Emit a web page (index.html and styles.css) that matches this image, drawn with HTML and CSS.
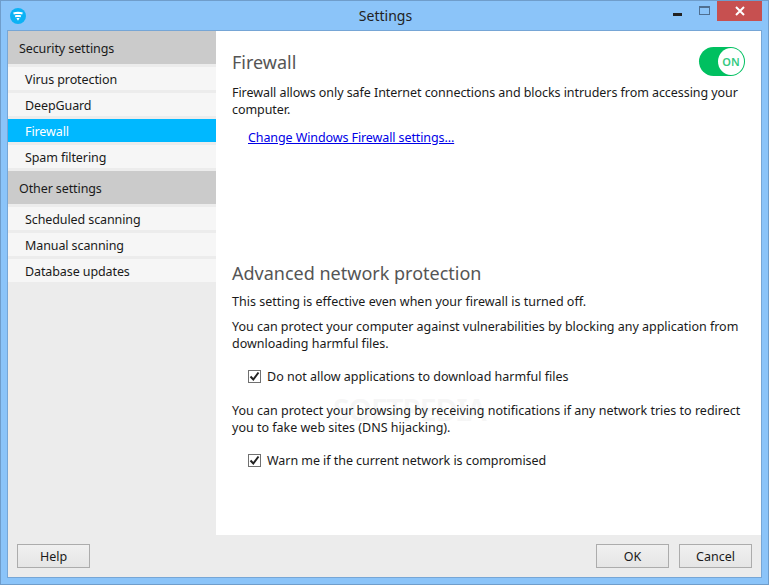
FILE: index.html
```html
<!DOCTYPE html>
<html lang="en">
<head>
<meta charset="utf-8">
<title>Settings</title>
<link rel="stylesheet" href="styles.css">
</head>
<body>
<div class="window">
  <header class="titlebar">
    <svg class="logo" width="16" height="16" viewBox="0 0 16 16"><circle cx="8" cy="8" r="8" fill="#0bb2f5"/><path d="M3.2 4.4 C6.2 3.6 9.8 3.6 12.8 4.4 L12.2 6.4 C9.4 5.8 6.6 5.8 3.8 6.4 Z M4.8 7.4 C7 7 9 7 11.2 7.4 L10.6 9.2 C8.8 8.9 7.2 8.9 5.4 9.2 Z M6.4 10 L9.6 10 L8 12.8 Z" fill="#fff"/></svg>
    <div class="title">Settings</div>
    <div class="controls">
      <div class="ctl min"><span class="min-bar"></span></div>
      <div class="ctl max"><span class="max-box"></span></div>
      <div class="ctl close"><svg width="10" height="10" viewBox="0 0 10 10"><path d="M1 1 L9 9 M9 1 L1 9" stroke="#fff" stroke-width="2"/></svg></div>
    </div>
  </header>
  <div class="client">
    <div class="main">
      <nav class="sidebar">
        <div class="group">Security settings</div>
        <div class="item">Virus protection</div>
        <div class="item">DeepGuard</div>
        <div class="item active">Firewall</div>
        <div class="item">Spam filtering</div>
        <div class="group">Other settings</div>
        <div class="item">Scheduled scanning</div>
        <div class="item">Manual scanning</div>
        <div class="item">Database updates</div>
      </nav>
      <section class="content">
        <div class="watermark">SOFTPEDIA</div>
        <div class="fw-head">
          <h1 class="heading fw-title">Firewall</h1>
          <div class="toggle"><span class="knob">ON</span></div>
        </div>
        <p class="text fw-text">Firewall allows only safe Internet connections and blocks intruders from accessing your computer.</p>
        <a class="link" href="#">Change Windows Firewall settings...</a>
        <h1 class="heading adv">Advanced network protection</h1>
        <p class="text p1">This setting is effective even when your firewall is turned off.</p>
        <p class="text p2">You can protect your computer against vulnerabilities by blocking any application from downloading harmful files.</p>
        <label class="check c1"><span class="box"><svg width="11" height="11" viewBox="0 0 11 11"><path d="M1.5 5.5 L4.3 8.5 L9.5 1.5" fill="none" stroke="#222" stroke-width="2"/></svg></span>Do not allow applications to download harmful files</label>
        <p class="text p3">You can protect your browsing by receiving notifications if any network tries to redirect you to fake web sites (DNS hijacking).</p>
        <label class="check c2"><span class="box"><svg width="11" height="11" viewBox="0 0 11 11"><path d="M1.5 5.5 L4.3 8.5 L9.5 1.5" fill="none" stroke="#222" stroke-width="2"/></svg></span>Warn me if the current network is compromised</label>
      </section>
    </div>
    <footer class="footer">
      <button class="btn">Help</button>
      <div class="spacer"></div>
      <button class="btn">OK</button>
      <button class="btn">Cancel</button>
    </footer>
  </div>
</div>
</body>
</html>
```
FILE: styles.css
```css
* { box-sizing: border-box; }
html, body { margin: 0; padding: 0; }
body {
  width: 769px; height: 585px; overflow: hidden;
  font-family: "Noto Sans", "Open Sans", sans-serif;
  font-size: 12.5px; color: #1a1a1a;
}
.window {
  width: 769px; height: 585px;
  background: #8bc4f9;
  border: 1px solid #6f9dcb;
  padding: 0 7px 7px 7px;
  display: flex; flex-direction: column;
}
.titlebar { height: 30px; display: flex; align-items: center; position: relative; flex: none; }
.logo { position: absolute; left: 2px; top: 7px; }
.title { flex: 1; text-align: center; font-size: 14px; color: #222; padding-left: 2px; margin-bottom: 2px; }
.controls { position: absolute; right: -1px; top: 0; display: flex; align-items: stretch; height: 20px; }
.ctl { display: flex; align-items: center; justify-content: center; }
.min { width: 27px; }
.min-bar { width: 9px; height: 3px; background: #222; margin-top: 6px; }
.max { width: 26px; }
.max-box { width: 11px; height: 9px; border: 1px solid #4f6f91; border-top-width: 2px; margin-top: -1px; }
.close { width: 45px; background: #c75050; }
.client {
  flex: 1; background: #ececec;
  display: flex; flex-direction: column;
  box-shadow: 0 0 0 1px #76a6d6;
}
.main { height: 504px; display: flex; flex: none; }
.sidebar { width: 208px; flex: none; display: flex; flex-direction: column; letter-spacing: -0.1px; }
.group { height: 33px; background: #cbcbcb; padding: 1px 0 0 11px; line-height: 33px; margin-bottom: 3px; }
.item { height: 23px; background: #f6f6f6; padding: 1px 0 0 17px; line-height: 23px; margin-bottom: 3px; }
.item.active { background: #00b8ff; color: #fff; }
.content { flex: 1; min-width: 0; background: #fff; padding: 16px 16px 0; position: relative; overflow: hidden; }
.watermark {
  position: absolute; left: 117px; top: 359px; pointer-events: none;
  font-size: 30px; font-weight: 600; letter-spacing: -1px; line-height: 40px; color: #f6f6f6;
}
.fw-head { display: flex; justify-content: space-between; align-items: flex-start; position: relative; }
.heading { margin: 0; font-size: 18px; font-weight: 400; color: #555; line-height: 24px; position: relative; }
.fw-title { margin-top: 3px; }
.toggle { width: 46px; height: 29px; border-radius: 15px; background: #00c060; position: relative; }
.knob {
  position: absolute; right: 1px; top: 1px; width: 26px; height: 27px;
  border-radius: 50%; background: #fff; color: #33c97f;
  font-size: 11px; font-weight: 600; line-height: 27px; text-align: center;
}
.text { margin: 0; line-height: 17px; position: relative; }
.fw-text { margin-top: 8px; width: 513px; letter-spacing: -0.06px; }
.link { display: block; margin: 11px 0 0 16px; color: #0000e6; line-height: 17px; position: relative; letter-spacing: -0.1px; }
.adv { margin-top: 115px; }
.p1 { margin-top: 8px; }
.p2 { margin-top: 8px; width: 513px; letter-spacing: -0.02px; }
.check { display: flex; align-items: center; line-height: 17px; position: relative; }
.box {
  width: 13px; height: 13px; border: 1px solid #707070; background: #fff;
  display: flex; align-items: center; justify-content: center; margin-right: 6px;
}
.c1 { margin: 16px 0 0 16px; }
.p3 { margin-top: 17px; width: 513px; }
.c2 { margin: 16px 0 0 16px; letter-spacing: -0.05px; }
.footer { flex: 1; display: flex; align-items: flex-start; padding: 9px 9px 0; gap: 10px; }
.spacer { flex: 1; }
.btn {
  width: 73px; height: 24px; border: 1px solid #acacac;
  background: linear-gradient(#f0f0f0, #e5e5e5);
  font: inherit; color: #1a1a1a; padding: 0;
}
```
